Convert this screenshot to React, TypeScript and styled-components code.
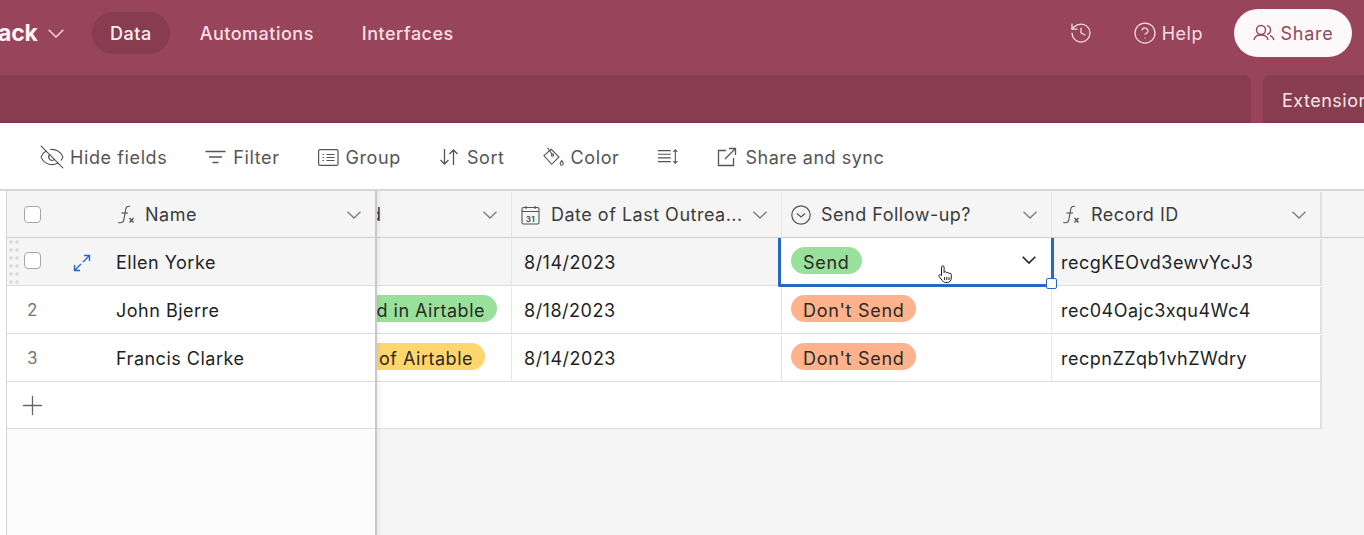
import React from 'react';
import styled, { createGlobalStyle } from 'styled-components';
import { CircleHelp, EyeOff, History, Plus } from 'lucide-react';

const GlobalStyle = createGlobalStyle`
  html, body {
    margin: 0;
    padding: 0;
    height: 100%;
    overflow: hidden;
    font-family: Inter, "Liberation Sans", sans-serif;
    letter-spacing: 0.5px;
  }
  #root {
    height: 100%;
  }
`;

const Page = styled.div`
  display: flex;
  flex-direction: column;
  width: 1364px;
  height: 535px;
  overflow: hidden;
  background: #fff;
`;

const TopBar = styled.header`
  display: flex;
  align-items: center;
  height: 75px;
  flex-shrink: 0;
  padding: 0 12px 9px 0;
  box-sizing: border-box;
  background: #98445a;
  color: #fff;
`;

const Brand = styled.div`
  display: flex;
  align-items: center;
  gap: 10px;
  width: 94px;
  margin-left: -2px;
  font-size: 23px;
  font-weight: 700;
  letter-spacing: -0.2px;
  color: #fdf3f5;
`;

const NavItem = styled.div<{ $active?: boolean }>`
  display: flex;
  align-items: center;
  height: 42px;
  padding: 0 18px;
  margin-right: 12px;
  border-radius: 21px;
  font-size: 18px;
  font-weight: 500;
  color: ${p => (p.$active ? '#fcf0f3' : '#f7dfe5')};
  background: ${p => (p.$active ? '#873c50' : 'transparent')};
`;

const Spacer = styled.div`
  flex: 1;
`;

const HeaderAction = styled.div<{ $gapAfter: number }>`
  display: flex;
  align-items: center;
  gap: 5px;
  margin-right: ${p => p.$gapAfter}px;
  font-size: 18px;
  font-weight: 400;
  color: #f7dfe5;
`;

const ShareButton = styled.button`
  display: flex;
  align-items: center;
  justify-content: center;
  gap: 6px;
  height: 48px;
  width: 118px;
  padding: 0;
  border: 0;
  border-radius: 24px;
  background: #fdf8f9;
  color: #98445a;
  font-family: inherit;
  font-size: 18px;
  font-weight: 400;
  letter-spacing: 0.7px;
`;

const TabBar = styled.div`
  display: flex;
  gap: 12px;
  height: 48px;
  flex-shrink: 0;
  background: #98445a;
`;

const TabPanel = styled.div`
  width: 1251px;
  background: #873c50;
  border-top-right-radius: 8px;
  box-shadow: inset 0 -2px 2px -1px rgba(90, 30, 50, 0.25);
`;

const ExtensionsTab = styled.div`
  flex: 1;
  display: flex;
  align-items: center;
  padding: 2px 0 0 19px;
  overflow: hidden;
  white-space: nowrap;
  background: #873c50;
  border-top-left-radius: 8px;
  box-shadow: inset 0 -2px 2px -1px rgba(90, 30, 50, 0.25);
  font-size: 18px;
  color: #f9e6eb;
`;

const Toolbar = styled.div`
  display: flex;
  align-items: center;
  gap: 38px;
  height: 68px;
  flex-shrink: 0;
  padding: 2px 0 0 41px;
  box-sizing: border-box;
  border-bottom: 2px solid #d6d6d6;
`;

const ToolButton = styled.div`
  display: flex;
  align-items: center;
  gap: 7px;
  font-size: 18px;
  letter-spacing: 0.6px;
  white-space: nowrap;
  color: #555;
`;

const ShareSyncButton = styled(ToolButton)`
  gap: 8px;
  letter-spacing: 0.5px;
`;

const HideIcon = styled(EyeOff)`
  margin: 0 -2px;
`;

const GridArea = styled.div`
  position: relative;
  flex: 1;
  display: flex;
  background: #f5f5f5;
`;

const Gutter = styled.div`
  width: 6px;
  background: #fff;
  border-right: 1px solid #d4d4d4;
  flex-shrink: 0;
`;

const FrozenPane = styled.div`
  position: relative;
  z-index: 2;
  width: 370px;
  flex-shrink: 0;
  box-sizing: border-box;
  background: #fcfcfc;
  border-right: 2px solid #c9c9c9;
`;

const PaneShadow = styled.div`
  position: absolute;
  top: 0;
  bottom: 0;
  left: 100%;
  margin-left: 2px;
  width: 5px;
  background: linear-gradient(to right, rgba(0, 0, 0, 0.05), rgba(0, 0, 0, 0));
`;

const ScrollPane = styled.div`
  flex: 1;
  min-width: 0;
  overflow: hidden;
`;

const Row = styled.div<{ $head?: boolean; $hover?: boolean; $height?: number }>`
  display: flex;
  height: ${p => p.$height ?? 48}px;
  box-sizing: border-box;
  padding-top: 1px;
  border-bottom: 1px solid ${p => (p.$head ? '#cfcfcf' : '#dedede')};
  background: ${p => (p.$head || p.$hover ? '#f5f5f5' : '#fff')};
  font-size: 18px;
  color: #1d1f25;
`;

const BodyRow = styled(Row)`
  width: 945px;
`;

const AddRowEnd = styled(BodyRow)`
  border-right: 2px solid #e0e0e0;
`;

const NumberCell = styled.div`
  position: relative;
  display: flex;
  align-items: center;
  width: 109px;
  flex-shrink: 0;
  color: #777;
  font-size: 17px;
`;

const RowIndex = styled.span`
  margin-left: 20px;
`;

const CheckBox = styled.span<{ $lift: number }>`
  width: 17px;
  height: 17px;
  margin: ${p => p.$lift}px 0 0 17px;
  box-sizing: border-box;
  border: 1px solid #a6a6a6;
  border-radius: 4px;
  background: #fff;
`;

const DragDots = styled.span`
  position: absolute;
  left: 1px;
  top: -1px;
  width: 12px;
  height: 47px;
  background-image: radial-gradient(circle, #dcdcdc 1.5px, transparent 1.8px);
  background-size: 6px 8px;
`;

const ExpandIcon = styled.svg`
  position: absolute;
  left: 65px;
  top: 15px;
`;

const AddIcon = styled(Plus)`
  margin-left: 10px;
`;

const NameCell = styled.div`
  flex: 1;
  display: flex;
  align-items: center;
  min-width: 0;
  padding-right: 14px;
`;

const Cell = styled.div<{ $end?: boolean; $last?: boolean }>`
  position: relative;
  display: flex;
  align-items: center;
  justify-content: ${p => (p.$end ? 'flex-end' : 'flex-start')};
  width: ${p => (p.$end ? 135 : 270)}px;
  flex-shrink: 0;
  box-sizing: border-box;
  padding: 0 14px 0 ${p => (p.$end ? '0' : '9px')};
  border-right: ${p => (p.$last ? '2px solid #e0e0e0' : '1px solid #e6e6e6')};
  overflow: ${p => (p.$end ? 'hidden' : 'visible')};
  white-space: nowrap;
`;

const DateCell = styled(Cell)`
  padding-left: 12px;
`;

const HeadLabel = styled.span`
  flex: 1;
  margin-left: 10px;
  color: #3b3b3b;
  white-space: nowrap;
`;

const NameLabel = styled(HeadLabel)`
  margin-left: 9px;
`;

const ClippedLabel = styled(HeadLabel)`
  margin-left: -7px;
`;

const Pill = styled.span<{ $color: string }>`
  display: inline-block;
  flex-shrink: 0;
  height: 27px;
  margin-top: -3px;
  line-height: 31px;
  padding: 0 12px;
  border-radius: 14px;
  background: ${p => p.$color};
  color: #2a2a26;
  letter-spacing: 0.7px;
`;

const ClippedPill = styled(Pill)<{ $trail: number }>`
  padding-left: 6px;
  margin-right: ${p => p.$trail}px;
  border-radius: 0 14px 14px 0;
  letter-spacing: 0.5px;
`;

const SelectedCell = styled.div`
  position: absolute;
  left: -4px;
  right: -3px;
  top: -1px;
  bottom: -2px;
  z-index: 3;
  border: 3px solid #2668c5;
  border-top: 0;
  border-radius: 0 0 2px 2px;
  background: #fff;
  display: flex;
  align-items: center;
  justify-content: space-between;
  padding: 2px 15px 0 10px;
`;

const ResizeHandle = styled.span`
  position: absolute;
  right: -6px;
  bottom: -5px;
  width: 11px;
  height: 11px;
  box-sizing: border-box;
  background: #fff;
  border: 1.5px solid #2668c5;
  border-radius: 2px;
`;

const HandCursor = styled.svg`
  position: absolute;
  left: 156px;
  top: 27px;
`;

const OpenChevron = styled.svg`
  margin-top: -4px;
`;

const HeadChevron = () => (
  <svg width="14" height="8" viewBox="0 0 14 8" fill="none" stroke="#7a7a7a" strokeWidth="1.3">
    <path d="M0.5 0.7L7 7l6.5-6.3" />
  </svg>
);

const FxIcon = () => (
  <svg width="20" height="20" viewBox="0 0 20 20" fill="none" stroke="#555" strokeWidth="1.15">
    <path d="M14 1.5c-2.6-.7-3.8.4-4.2 2.5L7.8 15c-.4 2.3-1.7 3.2-5.5 2.6" />
    <path d="M5.5 8h6.5" />
    <path d="M13.5 13l4 4.5M17.5 13l-4 4.5" strokeWidth="1.4" />
  </svg>
);

const CalendarIcon = () => (
  <svg width="20" height="20" viewBox="0 0 20 20" fill="none" stroke="#555" strokeWidth="1.1">
    <rect x="1" y="2.5" width="17" height="16.5" rx="1.5" />
    <path d="M1 6.5h17M5 1v3M14 1v3" />
    <text x="9.5" y="16.5" fontSize="8" fontWeight="700" textAnchor="middle" fill="#555" stroke="none" fontFamily="Inter">31</text>
  </svg>
);

const SelectIcon = () => (
  <svg width="20" height="20" viewBox="0 0 20 20" fill="none" stroke="#555" strokeWidth="1.2">
    <circle cx="10" cy="10" r="9.2" />
    <path d="M6 8.5l4 3.5 4-3.5" />
  </svg>
);

const FilterIcon = () => (
  <svg width="21" height="16" viewBox="0 0 21 16" fill="none" stroke="#555" strokeWidth="1.3">
    <path d="M0.5 2.5h20M4 8h13M7.5 13.5h6" />
  </svg>
);

const GroupIcon = () => (
  <svg width="21" height="17" viewBox="0 0 21 17" fill="none" stroke="#555" strokeWidth="1.2">
    <rect x="0.6" y="0.6" width="19.4" height="15.8" rx="1.5" />
    <path d="M4.5 5.5h1.6M8.5 5.5h8M4.5 8.5h1.6M8.5 8.5h8M4.5 11.5h1.6M8.5 11.5h8" />
  </svg>
);

const SortIcon = () => (
  <svg width="21" height="20" viewBox="0 0 21 20" fill="none" stroke="#555" strokeWidth="1.3">
    <path d="M5.5 2v15M1.5 13l4 4 4-4" />
    <path d="M14.5 18V3M10.5 7l4-4 4 4" />
  </svg>
);

const BucketIcon = () => (
  <svg width="21" height="22" viewBox="0 0 23 23" fill="none" stroke="#555" strokeWidth="1.2">
    <path d="M1 10L9 3l8.5 8.5-8 8z" />
    <path d="M5 1.5l5 7" />
    <circle cx="10.5" cy="9.5" r="1.2" />
    <path d="M20.5 15.5c1 1.5 1.7 2.3 1.7 3.3a1.7 1.7 0 0 1-3.4 0c0-1 .7-1.8 1.7-3.3z" />
  </svg>
);

const RowHeightIcon = () => (
  <svg width="22" height="20" viewBox="0 0 24 20" fill="none" stroke="#555" strokeWidth="1.2">
    <path d="M1 3h14M1 7h14M1 11h14M1 15h14" />
    <path d="M20 2.5v14M17.8 4.5L20 2.2l2.2 2.3M17.8 14.5l2.2 2.3 2.2-2.3" />
  </svg>
);

const ShareSyncIcon = () => (
  <svg width="20" height="20" viewBox="0 0 20 20" fill="none" stroke="#555" strokeWidth="1.3">
    <path d="M9 3.5H1.5v15h15V11" />
    <path d="M8 12L18.5 1.5M12 1.5h6.5V8" />
  </svg>
);

const PeopleIcon = () => (
  <svg width="22" height="20" viewBox="0 0 22 20" fill="none" stroke="#98445a" strokeWidth="1.4">
    <circle cx="8" cy="7" r="4.5" />
    <path d="M1 17c.5-3 3-5 7-5s6.5 2 7 5" />
    <path d="M14 2.6a4.5 4.5 0 0 1 0 8.8M17 12.5c2 .8 3.4 2.4 4 4.5" />
  </svg>
);

export default function App() {
  return (
    <Page>
      <GlobalStyle />
      <TopBar>
        <Brand>
          ack
          <svg width="16" height="9" viewBox="0 0 16 9" fill="none" stroke="#f7dfe5" strokeWidth="1.4">
            <path d="M0.7 0.7L8 8l7.3-7.3" />
          </svg>
        </Brand>
        <NavItem $active>Data</NavItem>
        <NavItem>Automations</NavItem>
        <NavItem>Interfaces</NavItem>
        <Spacer />
        <HeaderAction $gapAfter={40}>
          <History size={24} strokeWidth={1.25} />
        </HeaderAction>
        <HeaderAction $gapAfter={31}>
          <CircleHelp size={24} strokeWidth={1.25} />
          Help
        </HeaderAction>
        <ShareButton>
          <PeopleIcon />
          Share
        </ShareButton>
      </TopBar>
      <TabBar>
        <TabPanel />
        <ExtensionsTab>Extensions</ExtensionsTab>
      </TabBar>
      <Toolbar>
        <ToolButton>
          <HideIcon size={26} strokeWidth={1.1} />
          Hide fields
        </ToolButton>
        <ToolButton>
          <FilterIcon />
          Filter
        </ToolButton>
        <ToolButton>
          <GroupIcon />
          Group
        </ToolButton>
        <ToolButton>
          <SortIcon />
          Sort
        </ToolButton>
        <ToolButton>
          <BucketIcon />
          Color
        </ToolButton>
        <ToolButton>
          <RowHeightIcon />
        </ToolButton>
        <ShareSyncButton>
          <ShareSyncIcon />
          Share and sync
        </ShareSyncButton>
      </Toolbar>
      <GridArea>
        <Gutter />
        <FrozenPane>
          <PaneShadow />
          <Row $head $height={47}>
            <NumberCell>
              <CheckBox $lift={-1} />
            </NumberCell>
            <NameCell>
              <FxIcon />
              <NameLabel>Name</NameLabel>
              <HeadChevron />
            </NameCell>
          </Row>
          <Row $hover>
            <NumberCell>
              <DragDots />
              <CheckBox $lift={-3} />
              <ExpandIcon width="20" height="18" viewBox="0 0 20 18" fill="none" stroke="#2668c5" strokeWidth="1.4">
                <path d="M11 8l6-6M12 1.5h5.5V7" />
                <path d="M9 10l-6 6M8 16.5H2.5V11" />
              </ExpandIcon>
            </NumberCell>
            <NameCell>Ellen Yorke</NameCell>
          </Row>
          <Row>
            <NumberCell>
              <RowIndex>2</RowIndex>
            </NumberCell>
            <NameCell>John Bjerre</NameCell>
          </Row>
          <Row>
            <NumberCell>
              <RowIndex>3</RowIndex>
            </NumberCell>
            <NameCell>Francis Clarke</NameCell>
          </Row>
          <Row $height={47}>
            <NumberCell>
              <AddIcon size={31} strokeWidth={1} color="#666" />
            </NumberCell>
          </Row>
        </FrozenPane>
        <ScrollPane>
          <Row $head $height={47}>
            <Cell $end>
              <ClippedLabel>d</ClippedLabel>
              <HeadChevron />
            </Cell>
            <Cell>
              <CalendarIcon />
              <HeadLabel>Date of Last Outrea...</HeadLabel>
              <HeadChevron />
            </Cell>
            <Cell>
              <SelectIcon />
              <HeadLabel>Send Follow-up?</HeadLabel>
              <HeadChevron />
            </Cell>
            <Cell $last>
              <FxIcon />
              <HeadLabel>Record ID</HeadLabel>
              <HeadChevron />
            </Cell>
          </Row>
          <BodyRow $hover>
            <Cell $end />
            <DateCell>8/14/2023</DateCell>
            <Cell>
              <SelectedCell>
                <Pill $color="#99e09b">Send</Pill>
                <OpenChevron width="14" height="8" viewBox="0 0 14 8" fill="none" stroke="#222" strokeWidth="1.6">
                  <path d="M0.7 0.7L7 7l6.3-6.3" />
                </OpenChevron>
                <ResizeHandle />
                <HandCursor width="16" height="19" viewBox="0 0 16 19" fill="#fff" stroke="#222" strokeWidth="1">
                  <path d="M4.5 10.5V2.2a1.3 1.3 0 0 1 2.6 0V7.5a1.3 1.3 0 0 1 2.4 0v.6a1.3 1.3 0 0 1 2.4.3v.5a1.3 1.3 0 0 1 2.4.4V13c0 2.5-1.5 4.5-4 4.5H8.5c-1.7 0-2.5-1-3.3-2.2L2 11.5c-.9-1.3.8-2.5 1.8-1.4z" />
                  <path d="M7.6 12v3M9.8 12v3M12 12v3" />
                </HandCursor>
              </SelectedCell>
            </Cell>
            <Cell $last>recgKEOvd3ewvYcJ3</Cell>
          </BodyRow>
          <BodyRow>
            <Cell $end>
              <ClippedPill $color="#99e09b" $trail={0}>d in Airtable</ClippedPill>
            </Cell>
            <DateCell>8/18/2023</DateCell>
            <Cell>
              <Pill $color="#ffb28c">Don't Send</Pill>
            </Cell>
            <Cell $last>rec04Oajc3xqu4Wc4</Cell>
          </BodyRow>
          <BodyRow>
            <Cell $end>
              <ClippedPill $color="#ffd66e" $trail={12}>of Airtable</ClippedPill>
            </Cell>
            <DateCell>8/14/2023</DateCell>
            <Cell>
              <Pill $color="#ffb28c">Don't Send</Pill>
            </Cell>
            <Cell $last>recpnZZqb1vhZWdry</Cell>
          </BodyRow>
          <AddRowEnd $height={47} />
        </ScrollPane>
      </GridArea>
    </Page>
  );
}
